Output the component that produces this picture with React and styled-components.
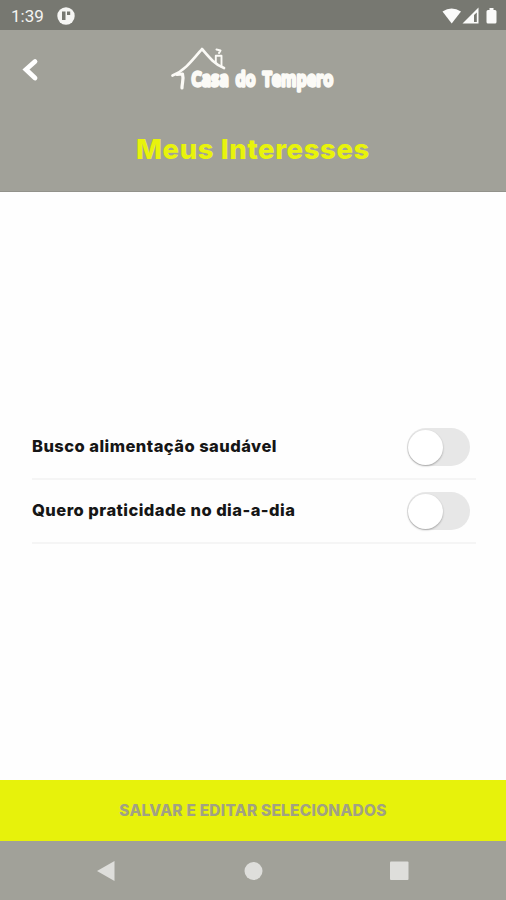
import styled, { createGlobalStyle } from 'styled-components';

const GlobalStyle = createGlobalStyle`
  * {
    box-sizing: border-box;
  }

  body {
    margin: 0;
    background: #fff;
    font-family: 'Inter', 'Open Sans', sans-serif;
  }
`;

const Screen = styled.div`
  display: flex;
  flex-direction: column;
  height: 100vh;
  background: #fefefe;
`;

const StatusBar = styled.div`
  display: flex;
  align-items: center;
  height: 30px;
  padding: 1px 7px 0 11px;
  background: #777871;
  color: #f4f4f2;
`;

const Clock = styled.span`
  font-family: 'Roboto', sans-serif;
  font-size: 17px;
  margin-right: 13px;
`;

const StatusIcons = styled.svg`
  margin-left: auto;
`;

const Header = styled.header`
  height: 162px;
  background: #a1a199;
  border-bottom: 1px solid #92928b;
`;

const TopRow = styled.div`
  display: grid;
  grid-template-columns: 171px 1fr;
  align-items: start;
  height: 100px;
  padding-top: 15px;
`;

const BackButton = styled.button`
  display: flex;
  width: 20px;
  margin: 12px 0 0 20px;
  padding: 0;
  border: none;
  background: transparent;
  cursor: pointer;
`;

const LogoSvg = styled.svg`
  overflow: visible;

  text {
    font-family: 'Open Sans', sans-serif;
    font-size: 20px;
    font-weight: 600;
    word-spacing: 3px;
    letter-spacing: 0.5px;
  }
`;

const Title = styled.h1`
  margin: 0;
  text-align: center;
  color: #e8f30c;
  font-size: 27.5px;
  font-weight: 800;
  line-height: 39px;
  letter-spacing: 0.6px;
`;

const Content = styled.main`
  flex: 1;
  display: flex;
  flex-direction: column;
  justify-content: center;
  padding: 0 30px 12px 32px;
`;

const Row = styled.div`
  display: flex;
  align-items: center;
  justify-content: space-between;
  height: 64px;
  padding-right: 6px;
  border-bottom: 2px solid #f5f5f5;
`;

const Label = styled.span`
  padding-bottom: 2px;
  color: #161616;
  font-size: 16.5px;
  font-weight: 800;
  letter-spacing: 0.46px;
`;

const Track = styled.button`
  display: flex;
  align-items: center;
  width: 63px;
  height: 38px;
  padding: 0;
  border: none;
  border-radius: 19px;
  background: #e7e7e7;
  cursor: pointer;
`;

const Thumb = styled.span`
  width: 35px;
  height: 35px;
  margin-left: 1px;
  border-radius: 50%;
  background: #fff;
  box-shadow: 0 1px 2px rgba(0, 0, 0, 0.3);
`;

const SaveButton = styled.button`
  height: 61px;
  padding: 0;
  border: none;
  background: #e7f20b;
  color: #a1a184;
  font-family: inherit;
  font-size: 15.5px;
  font-weight: 800;
  letter-spacing: 0.22px;
  cursor: pointer;
`;

const NavBar = styled.nav`
  display: flex;
  align-items: center;
  justify-content: space-between;
  height: 59px;
  padding: 0 96px;
  background: #a1a199;
`;

const interests = ['Busco alimentação saudável', 'Quero praticidade no dia-a-dia'];

const Logo = () => (
  <LogoSvg width="200" height="60" viewBox="171 45 200 60">
    <g fill="none" stroke="#fbfaf6" strokeLinecap="round" strokeLinejoin="round">
      <path d="M172.500 75.500 C184 71 191 62 202 49 C208 56 214 64 224 68" strokeWidth="2.700" />
      <path d="M177 74.500 L182.500 74 C184 79 182 83 182 88" strokeWidth="3.200" />
      <path d="M215.800 63 V55.800 H221.500 V67" strokeWidth="1.900" />
      <path d="M216.500 49.500 L220.500 50.500 L219 53" strokeWidth="2" />
    </g>
    <text
      x="191.500"
      y="85.500"
      textLength="142"
      lengthAdjust="spacingAndGlyphs"
      fill="#fbfaf6"
      stroke="#fbfaf6"
      strokeWidth="3.300"
      strokeLinejoin="round"
    >
      Casa do Tempero
    </text>
  </LogoSvg>
);

const App = () => {
  return (
    <>
      <GlobalStyle />
      <Screen>
        <StatusBar>
          <Clock>1:39</Clock>
          <svg width="18" height="18" viewBox="0 0 18 18">
            <circle cx="9" cy="9" r="8.700" fill="#f6f6f4" />
            <path d="M5 4.500 H8.500 V13 H5 Z M10 4.500 H13.200 V8 H10 Z" fill="#777871" />
          </svg>
          <StatusIcons width="57" height="20" viewBox="0 0 57 20" fill="#fbfbfa">
            <path d="M0.500 5.500 Q9.500 -0.500 19 5.500 L9.700 17.500 Z" />
            <path d="M20.500 17.500 L36.500 1.500 V17.500 Z" />
            <path d="M32 9 L34.800 6.500 V16 H32 Z" fill="#777871" />
            <path d="M47.500 2 H51.500 V4 H53 Q54.500 4 54.500 5.500 V16 Q54.500 17.500 53 17.500 H46 Q44.500 17.500 44.500 16 V5.500 Q44.500 4 46 4 H47.500 Z" />
          </StatusIcons>
        </StatusBar>
        <Header>
          <TopRow>
            <BackButton aria-label="Voltar">
              <svg width="20" height="26" viewBox="0 0 20 26">
                <path
                  d="M15 4.500 L6 12.500 L15 21"
                  fill="none"
                  stroke="#fff"
                  strokeWidth="4.800"
                  strokeLinecap="round"
                />
              </svg>
            </BackButton>
            <Logo />
          </TopRow>
          <Title>Meus Interesses</Title>
        </Header>
        <Content>
          {interests.map((label) => (
            <Row key={label}>
              <Label>{label}</Label>
              <Track role="switch" aria-checked="false" aria-label={label}>
                <Thumb />
              </Track>
            </Row>
          ))}
        </Content>
        <SaveButton>SALVAR E EDITAR SELECIONADOS</SaveButton>
        <NavBar>
          <svg width="20" height="22" viewBox="0 0 20 22">
            <path d="M1 11 L18.500 1 V21 Z" fill="#dededb" />
          </svg>
          <svg width="20" height="20" viewBox="0 0 20 20">
            <circle cx="10.500" cy="10" r="9" fill="#dededb" />
          </svg>
          <svg width="20" height="20" viewBox="0 0 20 20">
            <rect x="0" y="0.500" width="18.500" height="18.500" rx="1" fill="#dededb" />
          </svg>
        </NavBar>
      </Screen>
    </>
  );
};

export default App;
